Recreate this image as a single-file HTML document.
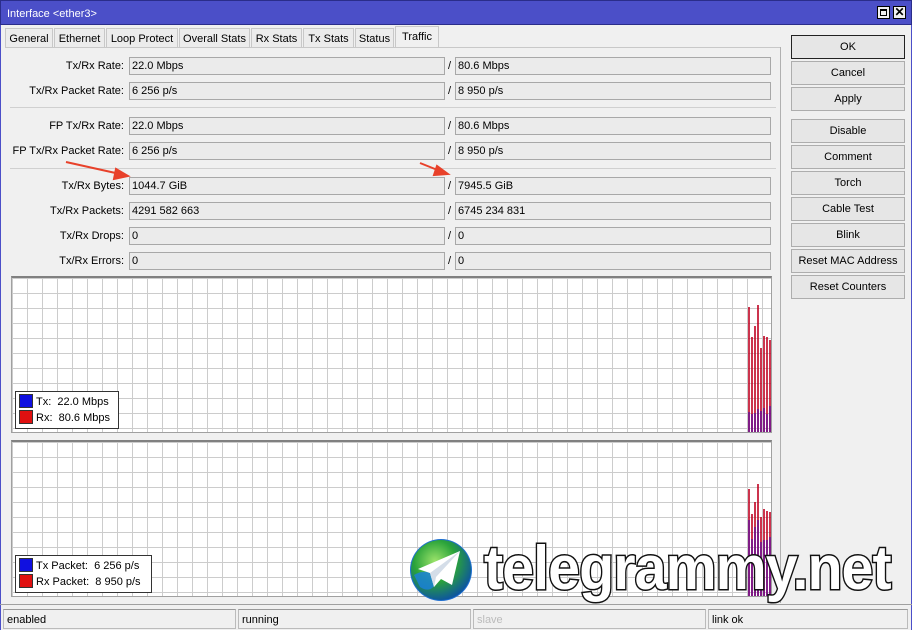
<!DOCTYPE html>
<html><head><style>
*{box-sizing:border-box;margin:0;padding:0}
body{width:912px;height:630px;overflow:hidden;background:#f0f0f0;font-family:"Liberation Sans",sans-serif;font-size:11px;color:#000;position:relative}
.abs{position:absolute}
.title{left:0;top:0;width:912px;height:25px;background:#4b4fc8;color:#fff;padding:7px 0 0 6px;font-size:11px;border:1px solid #2a2d8a}
.tb{top:6px;width:13px;height:13px;background:#f0f0f0;border:1px solid #000}
.tab{top:28px;height:20px;border:1px solid #c8c8c8;border-bottom:none;padding:4px 0 0;text-align:center;background:#ececec;white-space:nowrap}
.lab{width:124px;text-align:right;height:18px;line-height:18px;white-space:nowrap}
.fld{height:18px;background:#ebebeb;border:1px solid #a8a8a8;padding:1px 2px;line-height:15px}
.sl{line-height:18px}
.sep{left:10px;width:766px;height:1px;background:#d0d0d0}
.btn{left:791px;width:114px;height:24px;border:1px solid #adadad;background:#e6e6e6;text-align:center;line-height:22px}
.graph{left:11px;width:761px;background-color:#fff;border:1px solid #a0a0a0;border-top:2px solid #808080;
background-image:linear-gradient(90deg,#ccc 1px,transparent 1px),linear-gradient(#ccc 1px,transparent 1px);background-size:15px 15px;background-position:0 0}
.leg{background:#fff;border:1px solid #333;padding:2px 3px;line-height:16px;white-space:nowrap}
.sq{display:inline-block;width:14px;height:14px;vertical-align:-3px;margin-right:3px;border:1px solid #333}
.st{top:609px;height:20px;border:1px solid #bbb;border-top-color:#999;padding:3px 3px;line-height:14px}
</style></head><body>
<div class="abs title">Interface &lt;ether3&gt;</div>
<div class="abs tb" style="left:877px"><div style="margin:2px;width:7px;height:7px;border:1px solid #000;border-top-width:2px"></div></div>
<div class="abs tb" style="left:893px;text-align:center;font-size:12px;line-height:11px;color:#000;font-weight:bold">✕</div>
<div class="abs" style="left:0;top:25px;width:1px;height:605px;background:#4b4fc8"></div>
<div class="abs" style="left:911px;top:25px;width:1px;height:605px;background:#4b4fc8"></div>

<div class="abs tab" style="left:5px;width:48px">General</div>
<div class="abs tab" style="left:54px;width:51px">Ethernet</div>
<div class="abs tab" style="left:106px;width:72px">Loop Protect</div>
<div class="abs tab" style="left:179px;width:71px">Overall Stats</div>
<div class="abs tab" style="left:251px;width:51px">Rx Stats</div>
<div class="abs tab" style="left:303px;width:51px">Tx Stats</div>
<div class="abs tab" style="left:355px;width:39px">Status</div>
<div class="abs tab" style="left:395px;top:26px;height:22px;width:44px;background:#f0f0f0;padding-top:4px">Traffic</div>
<div class="abs" style="left:5px;top:47px;width:776px;height:1px;background:#c8c8c8"></div>
<div class="abs" style="left:780px;top:47px;width:1px;height:556px;background:#b0b0b0"></div>

<div class="abs lab" style="left:0;top:57px">Tx/Rx Rate:</div>
<div class="abs fld" style="left:129px;top:57px;width:316px">22.0 Mbps</div><div class="abs sl" style="left:448px;top:57px">/</div>
<div class="abs fld" style="left:455px;top:57px;width:316px">80.6 Mbps</div>
<div class="abs lab" style="left:0;top:82px">Tx/Rx Packet Rate:</div>
<div class="abs fld" style="left:129px;top:82px;width:316px">6 256 p/s</div><div class="abs sl" style="left:448px;top:82px">/</div>
<div class="abs fld" style="left:455px;top:82px;width:316px">8 950 p/s</div>
<div class="abs sep" style="top:107px"></div>
<div class="abs lab" style="left:0;top:117px">FP Tx/Rx Rate:</div>
<div class="abs fld" style="left:129px;top:117px;width:316px">22.0 Mbps</div><div class="abs sl" style="left:448px;top:117px">/</div>
<div class="abs fld" style="left:455px;top:117px;width:316px">80.6 Mbps</div>
<div class="abs lab" style="left:0;top:142px">FP Tx/Rx Packet Rate:</div>
<div class="abs fld" style="left:129px;top:142px;width:316px">6 256 p/s</div><div class="abs sl" style="left:448px;top:142px">/</div>
<div class="abs fld" style="left:455px;top:142px;width:316px">8 950 p/s</div>
<div class="abs sep" style="top:168px"></div>
<div class="abs lab" style="left:0;top:177px">Tx/Rx Bytes:</div>
<div class="abs fld" style="left:129px;top:177px;width:316px">1044.7 GiB</div><div class="abs sl" style="left:448px;top:177px">/</div>
<div class="abs fld" style="left:455px;top:177px;width:316px">7945.5 GiB</div>
<div class="abs lab" style="left:0;top:202px">Tx/Rx Packets:</div>
<div class="abs fld" style="left:129px;top:202px;width:316px">4291 582 663</div><div class="abs sl" style="left:448px;top:202px">/</div>
<div class="abs fld" style="left:455px;top:202px;width:316px">6745 234 831</div>
<div class="abs lab" style="left:0;top:227px">Tx/Rx Drops:</div>
<div class="abs fld" style="left:129px;top:227px;width:316px">0</div><div class="abs sl" style="left:448px;top:227px">/</div>
<div class="abs fld" style="left:455px;top:227px;width:316px">0</div>
<div class="abs lab" style="left:0;top:252px">Tx/Rx Errors:</div>
<div class="abs fld" style="left:129px;top:252px;width:316px">0</div><div class="abs sl" style="left:448px;top:252px">/</div>
<div class="abs fld" style="left:455px;top:252px;width:316px">0</div>

<svg class="abs" style="left:0;top:0" width="912" height="630">
<g stroke="#e8412a" stroke-width="2" fill="#e8412a">
<line x1="66" y1="162" x2="120" y2="174"/><polygon points="128,176 116,169 114,179"/>
<line x1="420" y1="163" x2="440" y2="171"/><polygon points="448,174 437,166 434,175"/>
</g></svg>

<div class="abs graph" style="top:276px;height:157px"></div>
<div class="abs graph" style="top:440px;height:157px"></div>
<svg class="abs" style="left:0;top:0" width="912" height="630">
<g stroke-width="1.6">
<g stroke="#c00020">
<line x1="749" y1="432" x2="749" y2="307"/><line x1="752" y1="432" x2="752" y2="337"/><line x1="755" y1="432" x2="755" y2="326"/><line x1="758" y1="432" x2="758" y2="305"/><line x1="761" y1="432" x2="761" y2="348"/><line x1="764" y1="432" x2="764" y2="336"/><line x1="767" y1="432" x2="767" y2="337"/><line x1="770" y1="432" x2="770" y2="340"/>
<line x1="749" y1="596" x2="749" y2="489"/><line x1="752" y1="596" x2="752" y2="514"/><line x1="755" y1="596" x2="755" y2="502"/><line x1="758" y1="596" x2="758" y2="484"/><line x1="761" y1="596" x2="761" y2="517"/><line x1="764" y1="596" x2="764" y2="509"/><line x1="767" y1="596" x2="767" y2="511"/><line x1="770" y1="596" x2="770" y2="512"/>
</g>
<g stroke="#6a0a8a">
<line x1="749" y1="432" x2="749" y2="412"/><line x1="752" y1="432" x2="752" y2="414"/><line x1="755" y1="432" x2="755" y2="413"/><line x1="758" y1="432" x2="758" y2="409"/><line x1="761" y1="432" x2="761" y2="411"/><line x1="764" y1="432" x2="764" y2="408"/><line x1="767" y1="432" x2="767" y2="414"/><line x1="770" y1="432" x2="770" y2="406"/>
<line x1="749" y1="596" x2="749" y2="520"/><line x1="752" y1="596" x2="752" y2="539"/><line x1="755" y1="596" x2="755" y2="527"/><line x1="758" y1="596" x2="758" y2="520"/><line x1="761" y1="596" x2="761" y2="542"/><line x1="764" y1="596" x2="764" y2="540"/><line x1="767" y1="596" x2="767" y2="540"/><line x1="770" y1="596" x2="770" y2="537"/>
</g></g></svg>
<div class="abs leg" style="left:15px;top:391px;width:104px;height:38px"><span class="sq" style="background:#1010e0"></span>Tx:&nbsp; 22.0 Mbps<br><span class="sq" style="background:#e01010"></span>Rx:&nbsp; 80.6 Mbps</div>
<div class="abs leg" style="left:15px;top:555px;width:137px;height:38px"><span class="sq" style="background:#1010e0"></span>Tx Packet:&nbsp; 6 256 p/s<br><span class="sq" style="background:#e01010"></span>Rx Packet:&nbsp; 8 950 p/s</div>

<div class="abs btn" style="top:35px;border:1px solid #222">OK</div>
<div class="abs btn" style="top:61px">Cancel</div>
<div class="abs btn" style="top:87px">Apply</div>
<div class="abs btn" style="top:119px">Disable</div>
<div class="abs btn" style="top:145px">Comment</div>
<div class="abs btn" style="top:171px">Torch</div>
<div class="abs btn" style="top:197px">Cable Test</div>
<div class="abs btn" style="top:223px">Blink</div>
<div class="abs btn" style="top:249px">Reset MAC Address</div>
<div class="abs btn" style="top:275px">Reset Counters</div>

<div class="abs" style="left:0;top:604px;width:912px;height:1px;background:#a0a0a0"></div>
<div class="abs st" style="left:3px;width:233px">enabled</div>
<div class="abs st" style="left:238px;width:233px">running</div>
<div class="abs st" style="left:473px;width:233px;color:#bbb">slave</div>
<div class="abs st" style="left:708px;width:200px">link ok</div>

<svg class="abs" style="left:408px;top:537px" width="66" height="66" viewBox="0 0 66 66">
<defs><radialGradient id="g" cx="0.4" cy="0.35" r="0.7"><stop offset="0" stop-color="#9be36a"/><stop offset="0.5" stop-color="#2aa33a"/><stop offset="1" stop-color="#0a4ea8"/></radialGradient></defs>
<circle cx="33" cy="33" r="31" fill="#1e6fd0"/>
<circle cx="33" cy="33" r="30" fill="url(#g)"/>
<path d="M6 38 Q20 30 30 42 Q24 58 12 50Z" fill="#1a7fe0" opacity=".8"/>
<path d="M52 14 L10 32 L22 36 L26 50 L33 42 L44 48Z" fill="#fff"/>
<path d="M22 36 L52 14 L28 40 L26 50Z" fill="#d4dde8"/>
</svg>
<div class="abs" style="left:484px;top:538px;font-size:62px;line-height:62px;letter-spacing:-1px;color:#fff;-webkit-text-stroke:3px #111;paint-order:stroke fill;font-weight:bold;white-space:nowrap;transform:scaleX(0.925);transform-origin:0 0">telegrammy.net</div>
</body></html>
